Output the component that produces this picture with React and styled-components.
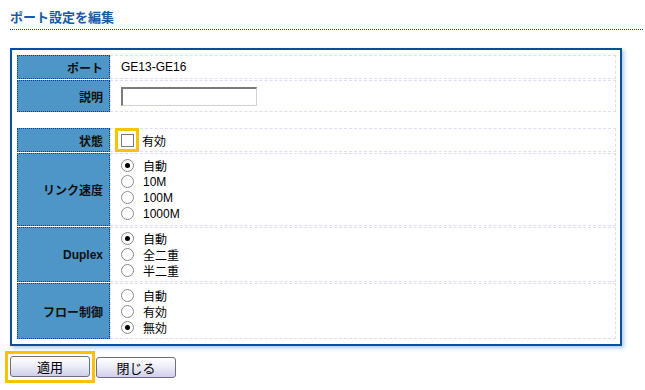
import React from 'react';
import styled, { createGlobalStyle } from 'styled-components';

const Global = createGlobalStyle`
  html, body { margin: 0; padding: 0; background: #fff; }
  body {
    font-family: "Liberation Sans", "Noto Sans CJK JP", sans-serif;
    font-size: 12px;
    color: #000;
  }
`;

const Page = styled.div`
  width: 645px;
  box-sizing: border-box;
  padding: 10px 2px 0 10px;
`;

const Title = styled.h1`
  margin: 0;
  font-size: 13px;
  font-weight: bold;
  line-height: 16px;
  color: #1a5aa3;
  padding-bottom: 3px;
  border-bottom: 1px dotted #0d4e9a;
`;

const Panel = styled.div`
  margin-top: 18px;
  width: 612px;
  box-sizing: border-box;
  border: 2px solid #0b4f9c;
  padding: 5px 4px 5px 5px;
  box-shadow: 2px 2px 4px rgba(70, 130, 210, 0.45);
  background: #fff;
`;

const Grid = styled.div`
  display: grid;
  grid-template-columns: 93px 506px;
  grid-template-rows: ${p => p.$rows};
  row-gap: 1px;
  & + & { margin-top: 16px; }
`;

const Label = styled.div`
  box-sizing: border-box;
  background: #4e96c8;
  border: 1px dotted #0a3f8a;
  display: flex;
  align-items: center;
  justify-content: flex-end;
  padding-right: 6px;
  font-weight: bold;
  color: #111;
`;

const Value = styled.div`
  box-sizing: border-box;
  border: 1px dashed #dedcf6;
  display: flex;
  flex-direction: ${p => (p.$row ? 'row' : 'column')};
  justify-content: ${p => (p.$row ? 'flex-start' : 'center')};
  align-items: ${p => (p.$row ? 'center' : 'flex-start')};
  padding-left: ${p => p.$pl || '10px'};
`;

const TextInput = styled.input`
  box-sizing: border-box;
  width: 136px;
  height: 19px;
  margin: 0;
  padding: 0 2px;
  border-style: solid;
  border-width: 2px 1px 1px 2px;
  border-color: #7b7b7b #d2d2d2 #d2d2d2 #7b7b7b;
  background: #fff;
  font: inherit;
`;

const Highlight = styled.div`
  box-sizing: border-box;
  border: 3px solid #f8c300;
  display: flex;
  align-items: center;
  justify-content: center;
  width: ${p => p.$w || 'auto'};
  height: ${p => p.$h || 'auto'};
  padding: ${p => p.$pad || '0'};
`;

const CheckMark = styled.span`
  box-sizing: border-box;
  width: 13px;
  height: 13px;
  border: 1px solid #7a7a7a;
  background: #fff;
`;

const CheckText = styled.span`
  margin-left: 3px;
`;

const Option = styled.div`
  display: flex;
  align-items: center;
  height: 16px;
  gap: 9px;
`;

const RadioMark = styled.span`
  box-sizing: border-box;
  width: 13px;
  height: 13px;
  flex: none;
  border: 1px solid #8a8a8a;
  border-radius: 50%;
  background: #fff;
  display: flex;
  align-items: center;
  justify-content: center;
  &::after {
    content: '';
    width: 5px;
    height: 5px;
    border-radius: 50%;
    background: ${p => (p.$on ? '#000' : 'transparent')};
  }
`;

const Buttons = styled.div`
  display: flex;
  align-items: center;
  gap: 1px;
  margin: 5px 0 0 -5px;
`;

const Button = styled.button`
  box-sizing: border-box;
  width: 80px;
  height: 21px;
  margin: 0;
  padding: 0;
  border: 1px solid #6e6e80;
  border-radius: 3px;
  background: linear-gradient(#ffffff 0%, #eeeef8 45%, #cfcfec 100%);
  font-family: "Liberation Sans", "Noto Sans CJK JP", sans-serif;
  font-size: 13px;
  color: #000;
`;

const RadioGroup = ({ options, selected }) => (
  <>
    {options.map(o => (
      <Option key={o}>
        <RadioMark $on={o === selected} />
        <span>{o}</span>
      </Option>
    ))}
  </>
);

export default function App() {
  return (
    <Page>
      <Global />
      <Title>ポート設定を編集</Title>
      <Panel>
        <Grid $rows="24px 32px">
          <Label>ポート</Label>
          <Value>GE13-GE16</Value>
          <Label>説明</Label>
          <Value>
            <TextInput type="text" />
          </Value>
        </Grid>
        <Grid $rows="24px 73px 55px 56px">
          <Label>状態</Label>
          <Value $row $pl="4px">
            <Highlight $w="24px" $h="24px">
              <CheckMark />
            </Highlight>
            <CheckText>有効</CheckText>
          </Value>
          <Label>リンク速度</Label>
          <Value>
            <RadioGroup options={['自動', '10M', '100M', '1000M']} selected="自動" />
          </Value>
          <Label>Duplex</Label>
          <Value>
            <RadioGroup options={['自動', '全二重', '半二重']} selected="自動" />
          </Value>
          <Label>フロー制御</Label>
          <Value>
            <RadioGroup options={['自動', '有効', '無効']} selected="無効" />
          </Value>
        </Grid>
      </Panel>
      <Buttons>
        <Highlight $pad="2px 2px 3px 2px">
          <Button>適用</Button>
        </Highlight>
        <Button>閉じる</Button>
      </Buttons>
    </Page>
  );
}
